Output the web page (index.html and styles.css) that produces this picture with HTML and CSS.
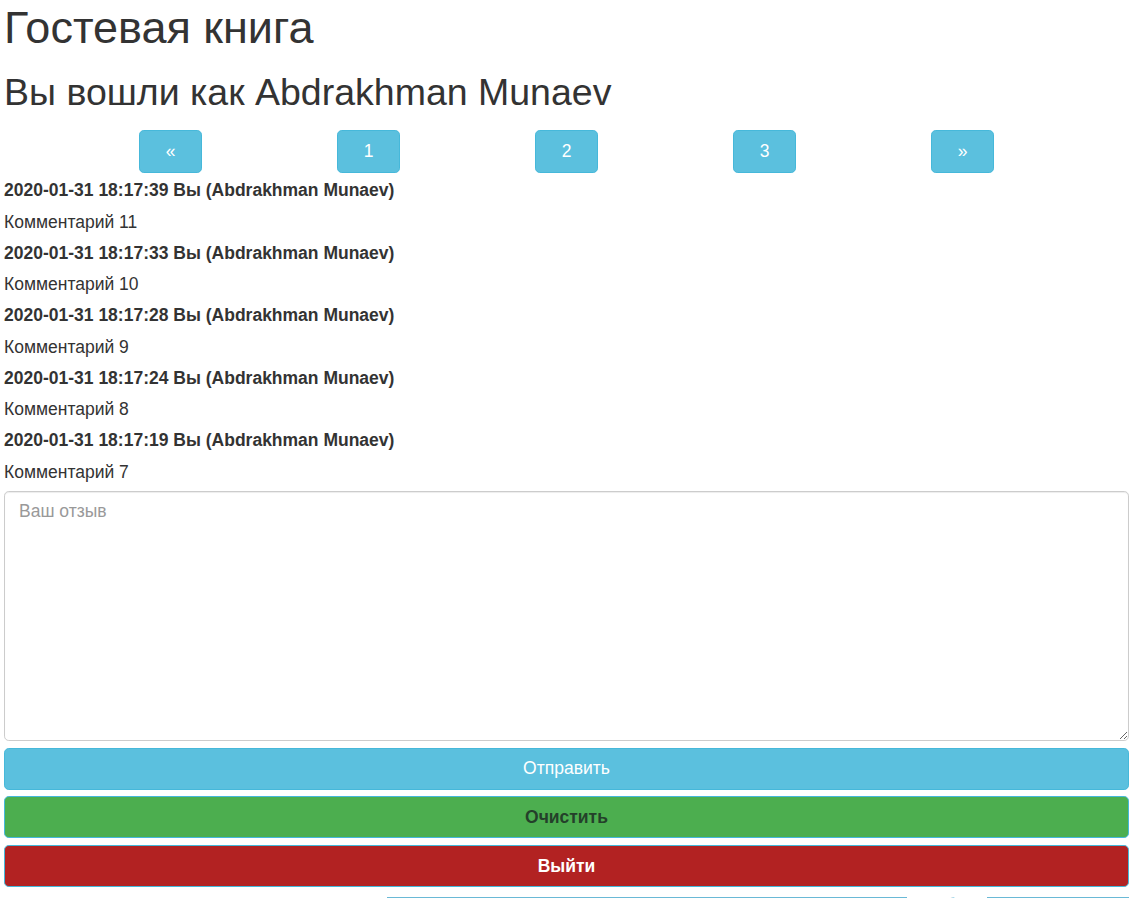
FILE: index.html
```html
<!DOCTYPE html>
<html lang="ru">
<head>
<meta charset="utf-8">
<title>Гостевая книга</title>
<link rel="stylesheet" href="styles.css">
</head>
<body>
<div class="page">
  <h1 class="title">Гостевая книга</h1>
  <h2 class="subtitle">Вы вошли как Abdrakhman Munaev</h2>
  <nav class="pager">
    <button class="pg">&laquo;</button>
    <button class="pg">1</button>
    <button class="pg">2</button>
    <button class="pg">3</button>
    <button class="pg">&raquo;</button>
  </nav>
  <div class="comments">
    <div class="meta">2020-01-31 18:17:39 Вы (Abdrakhman Munaev)</div>
    <div class="text">Комментарий 11</div>
    <div class="meta">2020-01-31 18:17:33 Вы (Abdrakhman Munaev)</div>
    <div class="text">Комментарий 10</div>
    <div class="meta">2020-01-31 18:17:28 Вы (Abdrakhman Munaev)</div>
    <div class="text">Комментарий 9</div>
    <div class="meta">2020-01-31 18:17:24 Вы (Abdrakhman Munaev)</div>
    <div class="text">Комментарий 8</div>
    <div class="meta">2020-01-31 18:17:19 Вы (Abdrakhman Munaev)</div>
    <div class="text">Комментарий 7</div>
  </div>
  <form class="form">
    <textarea class="review" placeholder="Ваш отзыв"></textarea>
    <button type="button" class="btn btn-send">Отправить</button>
    <button type="button" class="btn btn-clear">Очистить</button>
    <button type="button" class="btn btn-exit">Выйти</button>
  </form>
  <footer class="footer"><span class="footer-text">Разработка</span></footer>
</div>
</body>
</html>
```
FILE: styles.css
```css
html, body {
  margin: 0;
  padding: 0;
  background: #fff;
}
body {
  font-family: "Liberation Sans", Arial, sans-serif;
  font-size: 17.5px;
  line-height: 25px;
  color: #333;
}
.page {
  padding: 4px 5px 0 4px;
}
.title {
  margin: 0;
  font-size: 45px;
  font-weight: 500;
  line-height: 47px;
}
.subtitle {
  margin: 22px 0 0;
  font-size: 37.5px;
  font-weight: 500;
  line-height: 39.6px;
}
.pager {
  width: 990px;
  margin: 17.4px auto 0;
  display: flex;
  justify-content: space-around;
}
.pg {
  width: 63px;
  height: 43px;
  box-sizing: border-box;
  background: #5bc0de;
  border: 1px solid #46b8da;
  border-radius: 4.8px;
  color: #fff;
  font-family: "Liberation Sans", Arial, sans-serif;
  font-size: 17.5px;
  padding: 0;
}
.comments {
  margin-top: 2.3px;
}
.meta, .text {
  line-height: 31.25px;
}
.meta {
  font-weight: bold;
}
.form {
  margin: 0;
  display: flex;
  flex-direction: column;
  gap: 6.6px;
}
.review {
  margin-top: 3px;
  display: block;
  width: 100%;
  height: 250px;
  box-sizing: border-box;
  padding: 7px 14px;
  font-family: "Liberation Sans", Arial, sans-serif;
  font-size: 17.5px;
  line-height: 25px;
  color: #555;
  border: 1px solid #ccc;
  border-radius: 4.8px;
  resize: vertical;
  box-shadow: inset 0 1px 1px rgba(0,0,0,.075);
}
.review::placeholder {
  color: #999;
}
.btn {
  display: block;
  width: 100%;
  height: 42px;
  box-sizing: border-box;
  border: 1px solid #46b8da;
  border-radius: 4.8px;
  font-family: "Liberation Sans", Arial, sans-serif;
  font-size: 17.5px;
  padding: 0;
}
.btn-send {
  margin-top: 0.5px;
  background: #5bc0de;
  color: #fff;
}
.btn-clear {
  background: #4cae4f;
  color: #24402a;
  font-weight: bold;
}
.btn-exit {
  background: #b22222;
  color: #fff;
  font-weight: bold;
}
.footer {
  margin: 10px 0 0 383px;
  display: flex;
  height: 1px;
  overflow: hidden;
}
.footer::before,
.footer::after {
  content: "";
  border-top: 1px solid #6ab9d6;
}
.footer::before {
  flex: 0 0 520px;
}
.footer::after {
  flex: 1;
}
.footer-text {
  flex: 0 0 80px;
  font-size: 12px;
  line-height: 12px;
  color: #9fd3e6;
  text-align: center;
}
```
